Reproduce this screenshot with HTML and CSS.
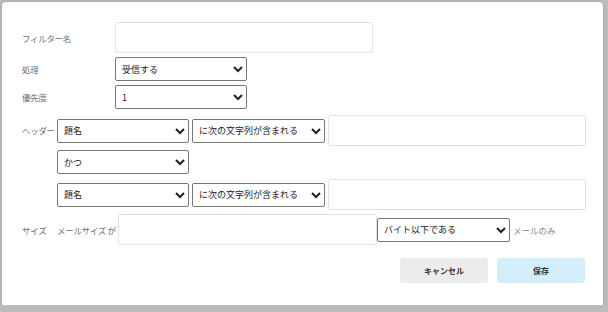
FILE: index.html
```html
<!DOCTYPE html>
<html lang="ja">
<head>
  <meta charset="UTF-8" />
  <title>フィルター</title>
  <link rel="stylesheet" href="styles.css">
</head>
<body>
  <div class="modal">
    <div class="row row-name">
      <label class="label wide">フィルター名</label>
      <input type="text" class="text-input name-input" />
    </div>

    <div class="row row-small">
      <label class="label wide">処理</label>
      <select class="select">
        <option>受信する</option>
      </select>
    </div>

    <div class="row row-small">
      <label class="label wide">優先度</label>
      <select class="select">
        <option>1</option>
      </select>
    </div>

    <div class="header-block">
      <label class="label narrow header-label">ヘッダー</label>
      <div class="header-rows">
        <div class="cond-row">
          <select class="select">
            <option>題名</option>
          </select>
          <select class="select">
            <option>に次の文字列が含まれる</option>
          </select>
          <input type="text" class="text-input cond-input" />
        </div>
        <div class="join-row">
          <select class="select">
            <option>かつ</option>
          </select>
        </div>
        <div class="cond-row">
          <select class="select">
            <option>題名</option>
          </select>
          <select class="select">
            <option>に次の文字列が含まれる</option>
          </select>
          <input type="text" class="text-input cond-input" />
        </div>
      </div>
    </div>

    <div class="row size-row">
      <label class="label narrow">サイズ</label>
      <span class="size-text">メールサイズ が</span>
      <input type="text" class="text-input size-input" />
      <select class="select">
        <option>バイト以下である</option>
      </select>
      <span class="note">メールのみ</span>
    </div>

    <div class="actions">
      <button class="btn btn-cancel">キャンセル</button>
      <button class="btn btn-save">保存</button>
    </div>
  </div>
</body>
</html>
```

FILE: styles.css
```css
body {
  margin: 0;
  padding: 2px 5px 5px 2px;
  background: #bcbcbc;
  font-family: "Noto Sans CJK JP", "Noto Sans", sans-serif;
  font-size: 9px;
  color: #333;
  height: 305px;
  box-sizing: border-box;
}

.modal {
  background: #fff;
  border-radius: 4px;
  height: 305px;
  box-sizing: border-box;
  padding: 20px 17px 0 20px;
  box-shadow: 0 0 3px rgba(0, 0, 0, 0.2);
}

.row {
  display: flex;
  align-items: center;
}

.row-small {
  margin-top: 4px;
}

.label {
  color: #707070;
  font-size: 8.5px;
  flex-shrink: 0;
  white-space: nowrap;
  letter-spacing: -0.3px;
}

.wide {
  width: 93px;
}

.narrow {
  width: 35px;
}

.text-input {
  height: 31px;
  box-sizing: border-box;
  border: 1px solid #dde3ea;
  border-radius: 3px;
  background: #fff;
  padding: 0 6px;
  margin: 0;
}

.name-input {
  width: 258px;
}

.select {
  width: 132px;
  height: 24px;
  box-sizing: border-box;
  border: 1px solid #767676;
  border-radius: 2px;
  background: #fff;
  font-family: "Noto Sans CJK JP", sans-serif;
  font-size: 9px;
  color: #222;
  margin: 0;
  padding: 0 2px;
}

.header-block {
  display: flex;
  margin-top: 6px;
}

.header-label {
  padding-top: 9px;
}

.cond-row {
  display: flex;
  align-items: center;
  gap: 3px;
}

.cond-row .select + .select {
  width: 133px;
}

.cond-input {
  width: 258px;
}

.join-row {
  margin: 4px 0 5px;
}

.size-row {
  margin-top: 4px;
}

.size-text {
  color: #707070;
  font-size: 8.5px;
  width: 61px;
  flex-shrink: 0;
  white-space: nowrap;
  letter-spacing: -0.3px;
}

.size-input {
  width: 259px;
}

.size-row .select {
  width: 133px;
}

.note {
  color: #888;
  font-size: 8.5px;
  margin-left: 3px;
  white-space: nowrap;
}

.actions {
  display: flex;
  justify-content: flex-end;
  gap: 9px;
  margin-top: 13px;
  padding-right: 1px;
}

.btn {
  width: 88px;
  height: 25px;
  border: none;
  border-radius: 3px;
  font-family: "Noto Sans CJK JP", sans-serif;
  font-size: 8px;
  font-weight: bold;
  color: #333;
  cursor: pointer;
}

.btn-cancel {
  background: #ececec;
}

.btn-save {
  background: #d3edfb;
}
```
